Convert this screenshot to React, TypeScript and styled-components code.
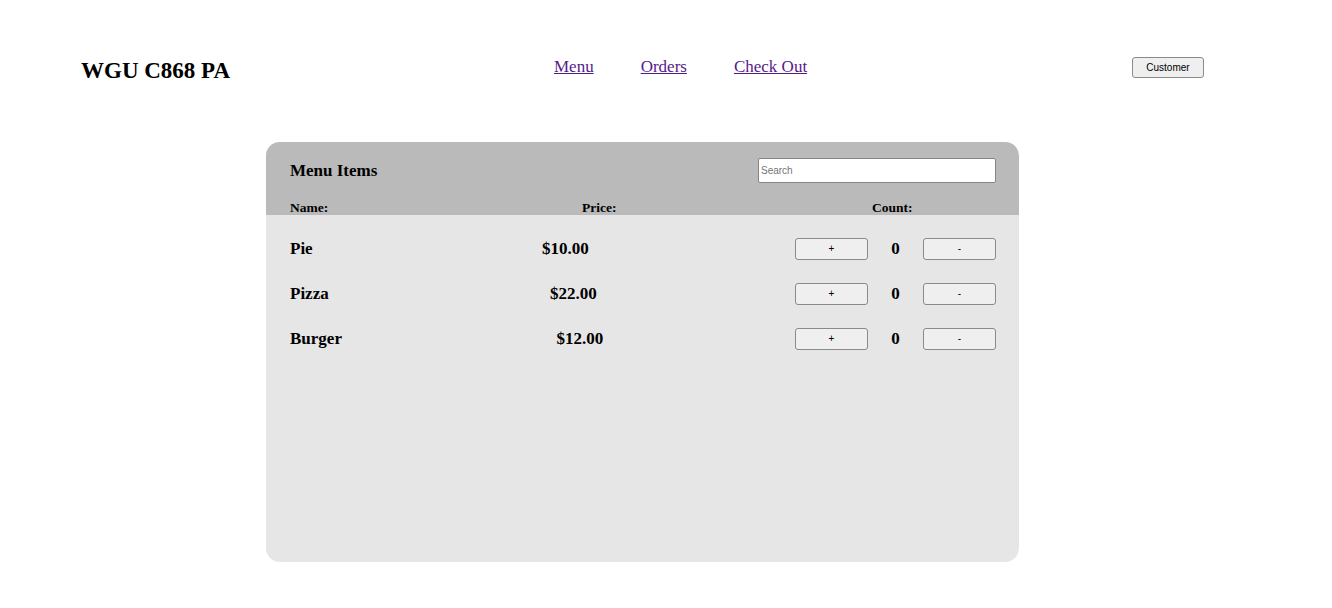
import React from 'react';
import styled, { createGlobalStyle } from 'styled-components';

const GlobalStyle = createGlobalStyle`
    body {
        margin: 0;
        background: #ffffff;
        font-family: "Liberation Serif", "Times New Roman", serif;
        color: #000000;
    }
`

const TopBar = styled.header`
    display: grid;
    grid-template-columns: 473px 1fr auto;
    align-items: center;
    height: 84px;
    padding: 50px 128px 0 81px;
    box-sizing: border-box;
`

const Brand = styled.h1`
    margin: 0;
    font-size: 23px;
    font-weight: bold;
    line-height: 1;
    transform: translateY(3px);
`

const NavLinks = styled.nav`
    display: flex;
    gap: 47px;
`

const NavLink = styled.a`
    color: #551a8b;
    font-size: 17px;
    text-decoration: underline;
`

const SmallButton = styled.button<{ wide?: boolean }>`
    width: ${({ wide }) => (wide ? '72px' : '73px')};
    height: ${({ wide }) => (wide ? '21px' : '22px')};
    padding: 0;
    background: #efefef;
    border: 1px solid #8a8a8a;
    border-radius: 3px;
    font-family: "Liberation Sans", Arial, sans-serif;
    font-size: 10px;
    color: #000000;
`

const Card = styled.section`
    width: 753px;
    height: 420px;
    margin: 58px 0 0 266px;
    border-radius: 14px;
    overflow: hidden;
    background: #e6e6e6;
    display: flex;
    flex-direction: column;
`

const CardHead = styled.div`
    background: #bababa;
    padding: 16px 23px 0 24px;
`

const TitleLine = styled.div`
    display: flex;
    align-items: center;
    justify-content: space-between;
`

const CardTitle = styled.h2`
    margin: 0;
    font-size: 17px;
    font-weight: bold;
`

const SearchBox = styled.input`
    width: 238px;
    height: 25px;
    box-sizing: border-box;
    padding: 0 2px;
    border: 1px solid #858585;
    border-radius: 2px;
    background: #ffffff;
    font-family: "Liberation Sans", Arial, sans-serif;
    font-size: 10px;

    &::placeholder {
        color: #757575;
    }
`

const ColumnHeads = styled.div`
    display: grid;
    grid-template-columns: 292px 290px 1fr;
    margin-top: 18px;
    font-size: 13.5px;
    font-weight: bold;
    line-height: 14px;
`

const CardBody = styled.div`
    padding: 11px 23px 0 24px;
`

const Row = styled.div`
    display: flex;
    align-items: center;
    height: 45px;
    font-size: 17px;
    font-weight: bold;
`

const Price = styled.span`
    flex: 1;
    padding-left: 23px;
    text-align: center;
`

const Counter = styled.div`
    display: flex;
    align-items: center;
    gap: 23px;
`

const Count = styled.span`
    width: 9px;
    text-align: center;
`

const items = [
    { name: 'Pie', price: '$10.00' },
    { name: 'Pizza', price: '$22.00' },
    { name: 'Burger', price: '$12.00' },
]

export default function App() {
    return (
        <>
            <GlobalStyle />
            <TopBar>
                <Brand>WGU C868 PA</Brand>
                <NavLinks>
                    <NavLink href="#">Menu</NavLink>
                    <NavLink href="#">Orders</NavLink>
                    <NavLink href="#">Check Out</NavLink>
                </NavLinks>
                <SmallButton wide>Customer</SmallButton>
            </TopBar>
            <Card>
                <CardHead>
                    <TitleLine>
                        <CardTitle>Menu Items</CardTitle>
                        <SearchBox placeholder="Search" />
                    </TitleLine>
                    <ColumnHeads>
                        <span>Name:</span>
                        <span>Price:</span>
                        <span>Count:</span>
                    </ColumnHeads>
                </CardHead>
                <CardBody>
                    {items.map((item) => (
                        <Row key={item.name}>
                            <span>{item.name}</span>
                            <Price>{item.price}</Price>
                            <Counter>
                                <SmallButton>+</SmallButton>
                                <Count>0</Count>
                                <SmallButton>-</SmallButton>
                            </Counter>
                        </Row>
                    ))}
                </CardBody>
            </Card>
        </>
    )
}
